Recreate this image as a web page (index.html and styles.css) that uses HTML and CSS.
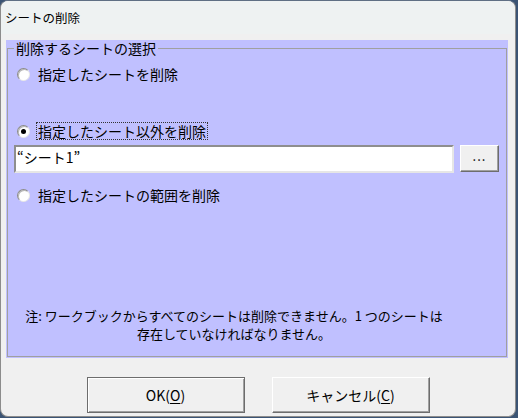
FILE: index.html
```html
<!DOCTYPE html>
<html lang="ja">
<head>
	<meta charset="UTF-8">
	<title>シートの削除</title>
	<link rel="stylesheet" href="styles.css">
</head>
<body>

<div class="window">
	<div class="titlebar">シートの削除</div>
	<div class="panel">
		<fieldset class="group">
			<legend>削除するシートの選択</legend>
			<div class="group-body">
				<div class="option">
					<span class="radio"></span>
					<span class="label">指定したシートを削除</span>
				</div>
				<div class="option option-2">
					<span class="radio checked"></span>
					<span class="label focus">指定したシート以外を削除</span>
				</div>
				<div class="sheet-row">
					<div class="textbox">“シート1”</div>
					<div class="btn-more">...</div>
				</div>
				<div class="option option-3">
					<span class="radio"></span>
					<span class="label">指定したシートの範囲を削除</span>
				</div>
				<p class="note">注: ワークブックからすべてのシートは削除できません。1 つのシートは<br>存在していなければなりません。</p>
			</div>
		</fieldset>
	</div>
	<div class="buttons">
		<div class="btn default">OK(<u>O</u>)</div>
		<div class="btn">キャンセル(<u>C</u>)</div>
	</div>
</div>

</body>
</html>
```

FILE: styles.css
```css
html, body {
	margin: 0;
	padding: 0;
}
body {
	width: 518px;
	height: 418px;
	background-color: #3b5474;
	font-family: "Noto Sans CJK JP", "Liberation Sans", sans-serif;
	color: #000;
	overflow: hidden;
}
.window {
	width: 514px;
	height: 415px;
	border: 1px solid #8c8c8c;
	border-top-color: #5f6f84;
	border-radius: 8px;
	background-color: #f0f0f0;
	overflow: hidden;
	display: flex;
	flex-direction: column;
}
.titlebar {
	height: 33px;
	line-height: 33px;
	padding-left: 4px;
	font-size: 12.5px;
	background-color: #eef2f2;
}
.panel {
	width: 502px;
	height: 318px;
	margin: 6px 0 0 5px;
	background-color: #c0c0ff;
	box-sizing: border-box;
}
.group {
	margin: 0 1px 1px;
	padding: 0 0 0 6px;
	border: 1px solid #a0a0a0;
	height: 317px;
	box-sizing: border-box;
}
.group legend {
	padding: 0 2px;
	font-size: 14px;
	line-height: 16px;
}
.group-body {
	height: 299px;
	display: flex;
	flex-direction: column;
	padding-top: 9px;
	box-sizing: border-box;
}
.option {
	display: flex;
	align-items: center;
	height: 18px;
	padding-left: 3px;
	font-size: 14px;
}
.option-2 {
	margin-top: 39px;
}
.option-3 {
	margin-top: 13px;
}
.radio {
	width: 13px;
	height: 13px;
	box-sizing: border-box;
	border-radius: 50%;
	background-color: #fff;
	border: 1px solid;
	border-color: #8a8a8a #e8e8e8 #e8e8e8 #8a8a8a;
	box-shadow: inset 1px 1px 0 #b8b8b8;
	margin-right: 6px;
	position: relative;
}
.radio.checked::after {
	content: "";
	position: absolute;
	left: 3px;
	top: 3px;
	width: 5px;
	height: 5px;
	border-radius: 50%;
	background-color: #000;
}
.label {
	border: 1px dotted transparent;
	padding: 0 1px;
	line-height: 16px;
}
.label.focus {
	border-color: #333;
}
.sheet-row {
	display: flex;
	gap: 6px;
	margin-top: 5px;
}
.textbox {
	width: 440px;
	height: 28px;
	box-sizing: border-box;
	background-color: #fff;
	border: 2px solid;
	border-color: #8e8e8e #e6e6e6 #e6e6e6 #8e8e8e;
	padding-left: 1px;
	font-size: 14px;
	line-height: 20px;
}
.btn-more {
	width: 39px;
	height: 27px;
	box-sizing: border-box;
	background-color: #f0f0f0;
	border: 1px solid;
	border-color: #fff #6d6d6d #6d6d6d #fff;
	box-shadow: inset -1px -1px 0 #a0a0a0;
	text-align: center;
	font-size: 13px;
	line-height: 20px;
	letter-spacing: 1px;
}
.note {
	margin: auto 0 0;
	width: 440px;
	font-size: 13px;
	line-height: 18px;
	text-align: center;
	padding-bottom: 12px;
}
.buttons {
	display: flex;
	justify-content: center;
	gap: 27px;
	margin-top: 19px;
}
.btn {
	width: 158px;
	height: 36px;
	box-sizing: border-box;
	background-color: #f0f0f0;
	border: 1px solid;
	border-color: #fff #6d6d6d #6d6d6d #fff;
	box-shadow: inset -1px -1px 0 #a0a0a0;
	text-align: center;
	font-size: 14px;
	line-height: 34px;
}
.btn.default {
	border-color: #6d6d6d;
	box-shadow: inset 1px 1px 0 #fff, inset -1px -1px 0 #a0a0a0;
}
.btn u {
	text-underline-offset: 2px;
}
```
